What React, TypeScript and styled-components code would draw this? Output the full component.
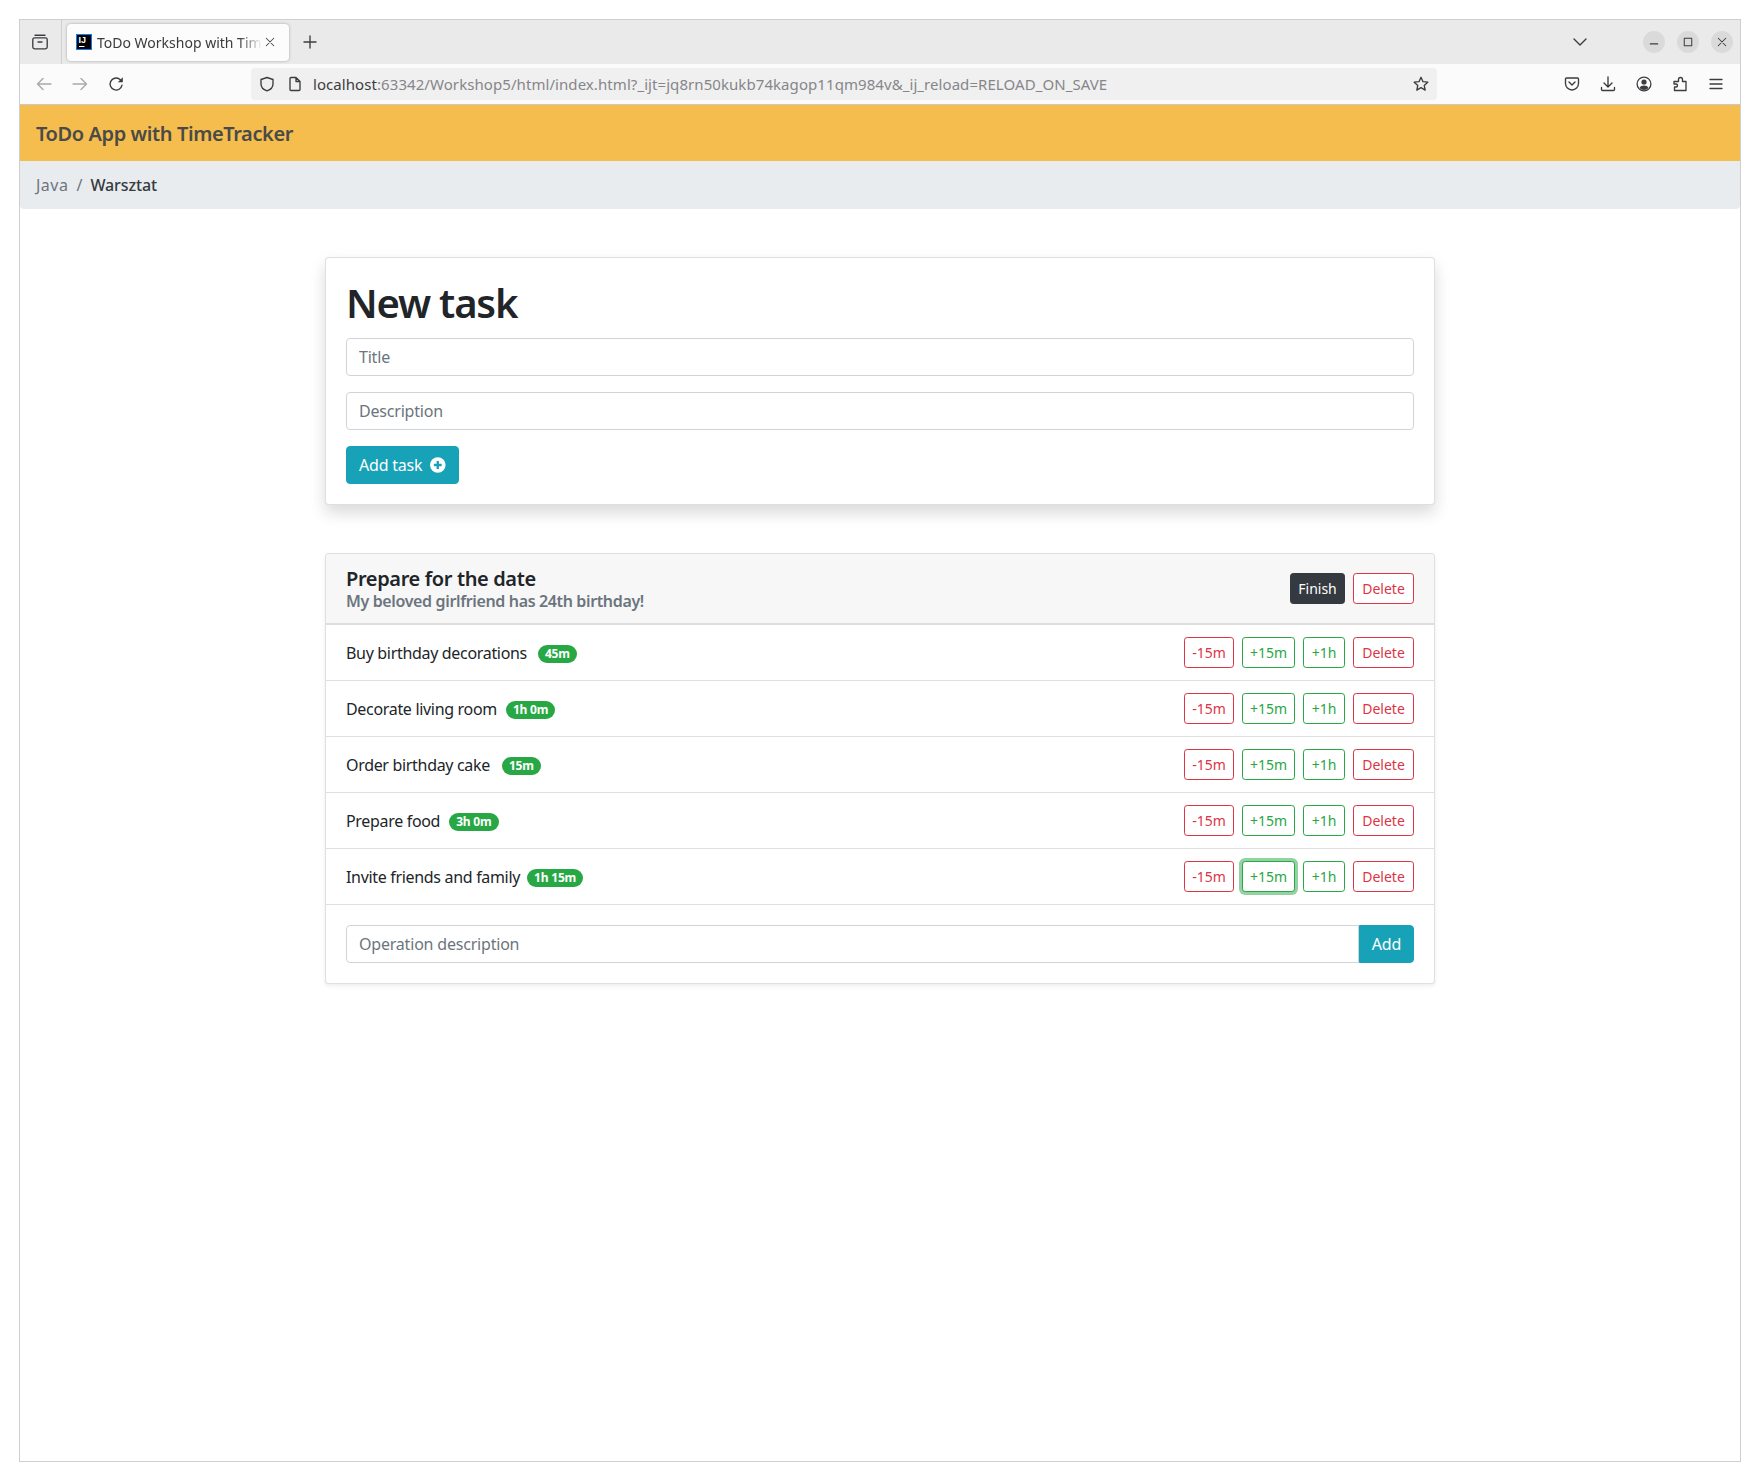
import React from "react";
import styled, { createGlobalStyle } from "styled-components";

const FONT = `"Noto Sans", "Open Sans", sans-serif`;

const GlobalStyle = createGlobalStyle`
    html, body {
        margin: 0;
        padding: 0;
        background: #fff;
        font-family: ${FONT};
    }
    * {
        box-sizing: border-box;
    }
`;

const Page = styled.div`
    width: 1760px;
    height: 1480px;
    padding: 19px;
`;

const Window = styled.div`
    width: 1722px;
    height: 1443px;
    border: 1px solid #cfcfcf;
    background: #fff;
    display: flex;
    flex-direction: column;
`;

const TabStrip = styled.div`
    height: 44px;
    background: #eaeaea;
    display: flex;
    align-items: center;
`;

const TabsButton = styled.div`
    width: 42px;
    height: 44px;
    padding-right: 2px;
    border-right: 1px solid #d0d0d0;
    display: flex;
    align-items: center;
    justify-content: center;
`;

const Tab = styled.div`
    width: 222px;
    height: 37px;
    margin-left: 5px;
    background: #fcfcfc;
    border-radius: 4px;
    box-shadow: 0 0 3px rgba(0, 0, 0, 0.3);
    display: flex;
    align-items: center;
    padding: 0 9px;
`;

const TabTitle = styled.span`
    font-size: 14px;
    color: #3b3b3d;
    margin-left: 5px;
    width: 167px;
    white-space: nowrap;
    -webkit-mask-image: linear-gradient(to right, #000 85%, transparent 99%);
    mask-image: linear-gradient(to right, #000 85%, transparent 99%);
`;

const NewTab = styled.div`
    margin-left: 13px;
    display: flex;
`;

const StripRight = styled.div`
    margin-left: auto;
    display: flex;
    align-items: center;
    padding-right: 7px;
`;

const WinButton = styled.div`
    width: 22px;
    height: 22px;
    border-radius: 50%;
    background: #dadada;
    margin-left: 12px;
    display: flex;
    align-items: center;
    justify-content: center;
`;

const ChevronBox = styled.div`
    display: flex;
    margin-right: 43px;
`;

const Toolbar = styled.div`
    height: 41px;
    background: #fbfbfb;
    border-bottom: 1px solid #c9c9c9;
    display: flex;
    align-items: center;
    padding: 0 16px;
`;

const NavIcons = styled.div`
    display: flex;
    gap: 20px;
    width: 215px;
`;

const UrlBar = styled.div`
    width: 1186px;
    height: 32px;
    background: #f0f0f0;
    border-radius: 4px;
    display: flex;
    align-items: center;
    padding: 0 8px;
    font-size: 15px;
    letter-spacing: 0.07px;
`;

const UrlHost = styled.span`
    color: #3c3c3e;
`;

const UrlRest = styled.span`
    color: #86868a;
`;

const UrlIcons = styled.div`
    display: flex;
    gap: 12px;
    margin-right: 10px;
`;

const Star = styled.div`
    margin-left: auto;
    display: flex;
`;

const ToolIcons = styled.div`
    margin-left: auto;
    display: flex;
    gap: 20px;
`;

const Navbar = styled.div`
    height: 56px;
    background: #f4bd4d;
    display: flex;
    align-items: center;
    padding: 0 16px;
    font-size: 20px;
    font-weight: 600;
    letter-spacing: -0.4px;
    color: #4a4a48;
`;

const Breadcrumb = styled.div`
    height: 48px;
    background: #e9ecef;
    border-radius: 0 0 4px 4px;
    display: flex;
    align-items: center;
    padding: 0 16px;
    font-size: 16px;
`;

const CrumbLink = styled.span`
    color: #6c757d;
    letter-spacing: 0.5px;
`;

const CrumbSep = styled.span`
    color: #6c757d;
    padding: 0 8px;
`;

const CrumbActive = styled.span`
    color: #343a40;
    font-weight: 500;
    letter-spacing: -0.1px;
`;

const Content = styled.div`
    display: flex;
    flex-direction: column;
    align-items: center;
    padding-top: 48px;
`;

const Card = styled.div<{ $big?: boolean }>`
    width: 1110px;
    background: #fff;
    border: 1px solid rgba(0, 0, 0, 0.125);
    border-radius: 4px;
    box-shadow: ${p => (p.$big ? "0 8px 16px rgba(0, 0, 0, 0.15)" : "0 2px 4px rgba(0, 0, 0, 0.075)")};
`;

const FormBody = styled.div`
    padding: 20px;
    display: flex;
    flex-direction: column;
`;

const Heading = styled.h1`
    margin: 0 0 11px;
    font-size: 40px;
    line-height: 49px;
    font-weight: 600;
    letter-spacing: -1.2px;
    color: #212529;
`;

const Input = styled.input<{ $flat?: boolean }>`
    display: block;
    width: 100%;
    height: 38px;
    padding: 6px 12px;
    font-family: ${FONT};
    font-size: 16px;
    letter-spacing: -0.2px;
    color: #495057;
    background: #fff;
    border: 1px solid #ced4da;
    border-radius: ${p => (p.$flat ? "4px 0 0 4px" : "4px")};
    margin-bottom: ${p => (p.$flat ? "0" : "16px")};
    outline: none;

    &::placeholder {
        color: #6c757d;
        opacity: 1;
    }
`;

const InfoButton = styled.button<{ $joined?: boolean }>`
    height: 38px;
    border: 1px solid #17a2b8;
    background: #17a2b8;
    color: #fff;
    font-family: ${FONT};
    font-size: 16px;
    letter-spacing: -0.2px;
    white-space: nowrap;
    padding: 0 12px;
    border-radius: ${p => (p.$joined ? "0 4px 4px 0" : "4px")};
    display: inline-flex;
    align-items: center;
    justify-content: center;
    gap: 8px;
    flex: none;
    align-self: flex-start;
    width: ${p => (p.$joined ? "55px" : "113px")};
`;

const AddRow = styled.div`
    display: flex;
`;

const TaskGap = styled.div`
    height: 48px;
`;

const CardHeader = styled.div`
    height: 71px;
    background: #f7f7f7;
    border-bottom: 2px solid #dedede;
    border-radius: 4px 4px 0 0;
    display: flex;
    align-items: center;
    justify-content: space-between;
    padding: 0 20px;
`;

const HeaderText = styled.div`
    display: flex;
    flex-direction: column;
`;

const TaskTitle = styled.div`
    font-size: 20px;
    line-height: 24px;
    font-weight: 600;
    letter-spacing: -0.37px;
    color: #212529;
`;

const TaskSub = styled.div`
    margin-top: 1px;
    font-size: 16px;
    line-height: 19px;
    font-weight: 600;
    letter-spacing: -0.36px;
    color: #6c757d;
`;

const Actions = styled.div`
    display: flex;
    gap: 8px;
`;

const Row = styled.div`
    height: 56px;
    border-bottom: 1px solid #dfdfdf;
    display: flex;
    align-items: center;
    justify-content: space-between;
    padding: 0 20px;
`;

const OpName = styled.div`
    display: flex;
    align-items: center;
    font-size: 16px;
    letter-spacing: -0.32px;
    color: #212529;
`;

const Badge = styled.span<{ $gap: number }>`
    background: #28a745;
    color: #fff;
    font-size: 12px;
    font-weight: 700;
    letter-spacing: -0.2px;
    line-height: 18px;
    height: 18px;
    border-radius: 10px;
    padding: 0 7px;
    margin-left: ${p => p.$gap}px;
    position: relative;
    top: 1px;
`;

const SmallButton = styled.button<{ $kind: "danger" | "success" | "dark"; $width: number; $focus?: boolean }>`
    width: ${p => p.$width}px;
    height: 31px;
    padding: 0;
    font-family: ${FONT};
    font-size: 14px;
    border-radius: 3.2px;
    border: 1px solid ${p => (p.$kind === "danger" ? "#dc3545" : p.$kind === "success" ? "#28a745" : "#343a40")};
    color: ${p => (p.$kind === "danger" ? "#dc3545" : p.$kind === "success" ? "#28a745" : "#fff")};
    background: ${p => (p.$kind === "dark" ? "#343a40" : "#fff")};
    box-shadow: ${p => (p.$focus ? "0 0 0 3px rgba(40, 167, 69, 0.5)" : "none")};
`;

const Footer = styled.div`
    padding: 20px;
`;

const ICON = "#3c3c40";

type IconProps = { size?: number; color?: string };

const Line: React.FC<React.PropsWithChildren<IconProps>> = ({ size = 16, color = ICON, children }) => (
    <svg width={size} height={size} viewBox="0 0 16 16" fill="none" stroke={color} strokeWidth={1.35} strokeLinecap="round" strokeLinejoin="round">
        {children}
    </svg>
);

const operations = [
    { name: "Buy birthday decorations", time: "45m", gap: 11 },
    { name: "Decorate living room", time: "1h 0m", gap: 9 },
    { name: "Order birthday cake", time: "15m", gap: 12 },
    { name: "Prepare food", time: "3h 0m", gap: 9 },
    { name: "Invite friends and family", time: "1h 15m", gap: 7 },
];

const App = () => (
    <Page>
        <GlobalStyle />
        <Window>
            <TabStrip>
                <TabsButton>
                    <Line>
                        <path d="M3 1.200h10" />
                        <rect x="0.800" y="3.800" width="14.400" height="11" rx="1.800" />
                        <path d="M6 8h4" />
                    </Line>
                </TabsButton>
                <Tab>
                    <svg width="16" height="16" viewBox="0 0 16 16">
                        <rect x="0.500" y="0.500" width="15" height="15" fill="#000" stroke="#0a7cf0" />
                        <text x="2.500" y="9" fontSize="9" fontWeight="700" fill="#fff" fontFamily="'Liberation Sans', sans-serif">IJ</text>
                        <rect x="3" y="12" width="5.500" height="1" fill="#fff" />
                    </svg>
                    <TabTitle>ToDo Workshop with Tim</TabTitle>
                    <Line size={12} color="#4a4a4e">
                        <path d="M3 3l10 10M13 3L3 13" />
                    </Line>
                </Tab>
                <NewTab>
                    <Line>
                        <path d="M8 2v12M2 8h12" />
                    </Line>
                </NewTab>
                <StripRight>
                    <ChevronBox>
                        <Line>
                            <path d="M2 5l6 6 6-6" />
                        </Line>
                    </ChevronBox>
                    <WinButton>
                        <Line size={12}>
                            <path d="M3 10.500h10" />
                        </Line>
                    </WinButton>
                    <WinButton>
                        <Line size={12}>
                            <rect x="3" y="3" width="10" height="10" />
                        </Line>
                    </WinButton>
                    <WinButton>
                        <Line size={12}>
                            <path d="M3 3l10 10M13 3L3 13" />
                        </Line>
                    </WinButton>
                </StripRight>
            </TabStrip>
            <Toolbar>
                <NavIcons>
                    <Line color="#a9a9ab">
                        <path d="M15 8H1.500M7 2.500L1.500 8 7 13.500" />
                    </Line>
                    <Line color="#a9a9ab">
                        <path d="M1 8h13.500M9 2.500L14.500 8 9 13.500" />
                    </Line>
                    <svg width="16" height="16" viewBox="0 0 16 16">
                        <path d="M14 9.200A6 6 0 1 1 11.500 3.100L13 4.600" fill="none" stroke={ICON} strokeWidth="1.350" strokeLinecap="round" />
                        <path d="M14.800 1.200v5h-5z" fill={ICON} />
                    </svg>
                </NavIcons>
                <UrlBar>
                    <UrlIcons>
                        <Line>
                            <path d="M8 1.500l6 2v4.500c0 3.500-2.800 5.800-6 6.800-3.200-1-6-3.300-6-6.800V3.500z" />
                        </Line>
                        <Line>
                            <path d="M3 2.500a1 1 0 0 1 1-1h5l4 4v8a1 1 0 0 1-1 1H4a1 1 0 0 1-1-1zM9 1.500v4h4" />
                        </Line>
                    </UrlIcons>
                    <UrlHost>localhost</UrlHost>
                    <UrlRest>:63342/Workshop5/html/index.html?_ijt=jq8rn50kukb74kagop11qm984v&_ij_reload=RELOAD_ON_SAVE</UrlRest>
                    <Star>
                        <Line>
                            <path d="M8 1.300l2 4.400 4.800.5-3.600 3.200 1 4.700L8 11.700l-4.200 2.400 1-4.700L1.200 6.200 6 5.700z" />
                        </Line>
                    </Star>
                </UrlBar>
                <ToolIcons>
                    <Line>
                        <path d="M2.500 2h11a1 1 0 0 1 1 1v4.500a6.500 6.500 0 0 1-13 0V3a1 1 0 0 1 1-1zM5 6l3 3 3-3" />
                    </Line>
                    <Line>
                        <path d="M8 1v9.500M4 7l4 4 4-4M1.500 11.500v2a1 1 0 0 0 1 1h11a1 1 0 0 0 1-1v-2" />
                    </Line>
                    <svg width="16" height="16" viewBox="0 0 16 16">
                        <circle cx="8" cy="8" r="6.900" fill="none" stroke={ICON} strokeWidth="1.300" />
                        <circle cx="8" cy="6" r="2.600" fill={ICON} />
                        <path d="M3.500 12c1-1.800 2.500-2.500 4.500-2.500s3.500.7 4.500 2.500a6 6 0 0 1-9 0z" fill={ICON} />
                    </svg>
                    <Line>
                        <path d="M2 5.500h4.500V3.500a2 2 0 0 1 4 0v2H14v9H2.500V11H4a1.500 1.500 0 0 0 0-3H2z" />
                    </Line>
                    <Line>
                        <path d="M2 3.500h12M2 8h12M2 12.500h12" />
                    </Line>
                </ToolIcons>
            </Toolbar>
            <Navbar>ToDo App with TimeTracker</Navbar>
            <Breadcrumb>
                <CrumbLink>Java</CrumbLink>
                <CrumbSep>/</CrumbSep>
                <CrumbActive>Warsztat</CrumbActive>
            </Breadcrumb>
            <Content>
                <Card $big>
                    <FormBody>
                        <Heading>New task</Heading>
                        <Input placeholder="Title" />
                        <Input placeholder="Description" />
                        <InfoButton>
                            Add task
                            <svg width="16" height="16" viewBox="0 0 16 16">
                                <circle cx="8" cy="8" r="8" fill="#fff" />
                                <path d="M8 4v8M4 8h8" stroke="#17a2b8" strokeWidth="2.400" />
                            </svg>
                        </InfoButton>
                    </FormBody>
                </Card>
                <TaskGap />
                <Card>
                    <CardHeader>
                        <HeaderText>
                            <TaskTitle>Prepare for the date</TaskTitle>
                            <TaskSub>My beloved girlfriend has 24th birthday!</TaskSub>
                        </HeaderText>
                        <Actions>
                            <SmallButton $kind="dark" $width={55}>Finish</SmallButton>
                            <SmallButton $kind="danger" $width={61}>Delete</SmallButton>
                        </Actions>
                    </CardHeader>
                    {operations.map((op, i) => (
                        <Row key={op.name}>
                            <OpName>
                                {op.name}
                                <Badge $gap={op.gap}>{op.time}</Badge>
                            </OpName>
                            <Actions>
                                <SmallButton $kind="danger" $width={50}>-15m</SmallButton>
                                <SmallButton $kind="success" $width={53} $focus={i === 4}>+15m</SmallButton>
                                <SmallButton $kind="success" $width={42}>+1h</SmallButton>
                                <SmallButton $kind="danger" $width={61}>Delete</SmallButton>
                            </Actions>
                        </Row>
                    ))}
                    <Footer>
                        <AddRow>
                            <Input $flat placeholder="Operation description" />
                            <InfoButton $joined>Add</InfoButton>
                        </AddRow>
                    </Footer>
                </Card>
            </Content>
        </Window>
    </Page>
);

export default App;
